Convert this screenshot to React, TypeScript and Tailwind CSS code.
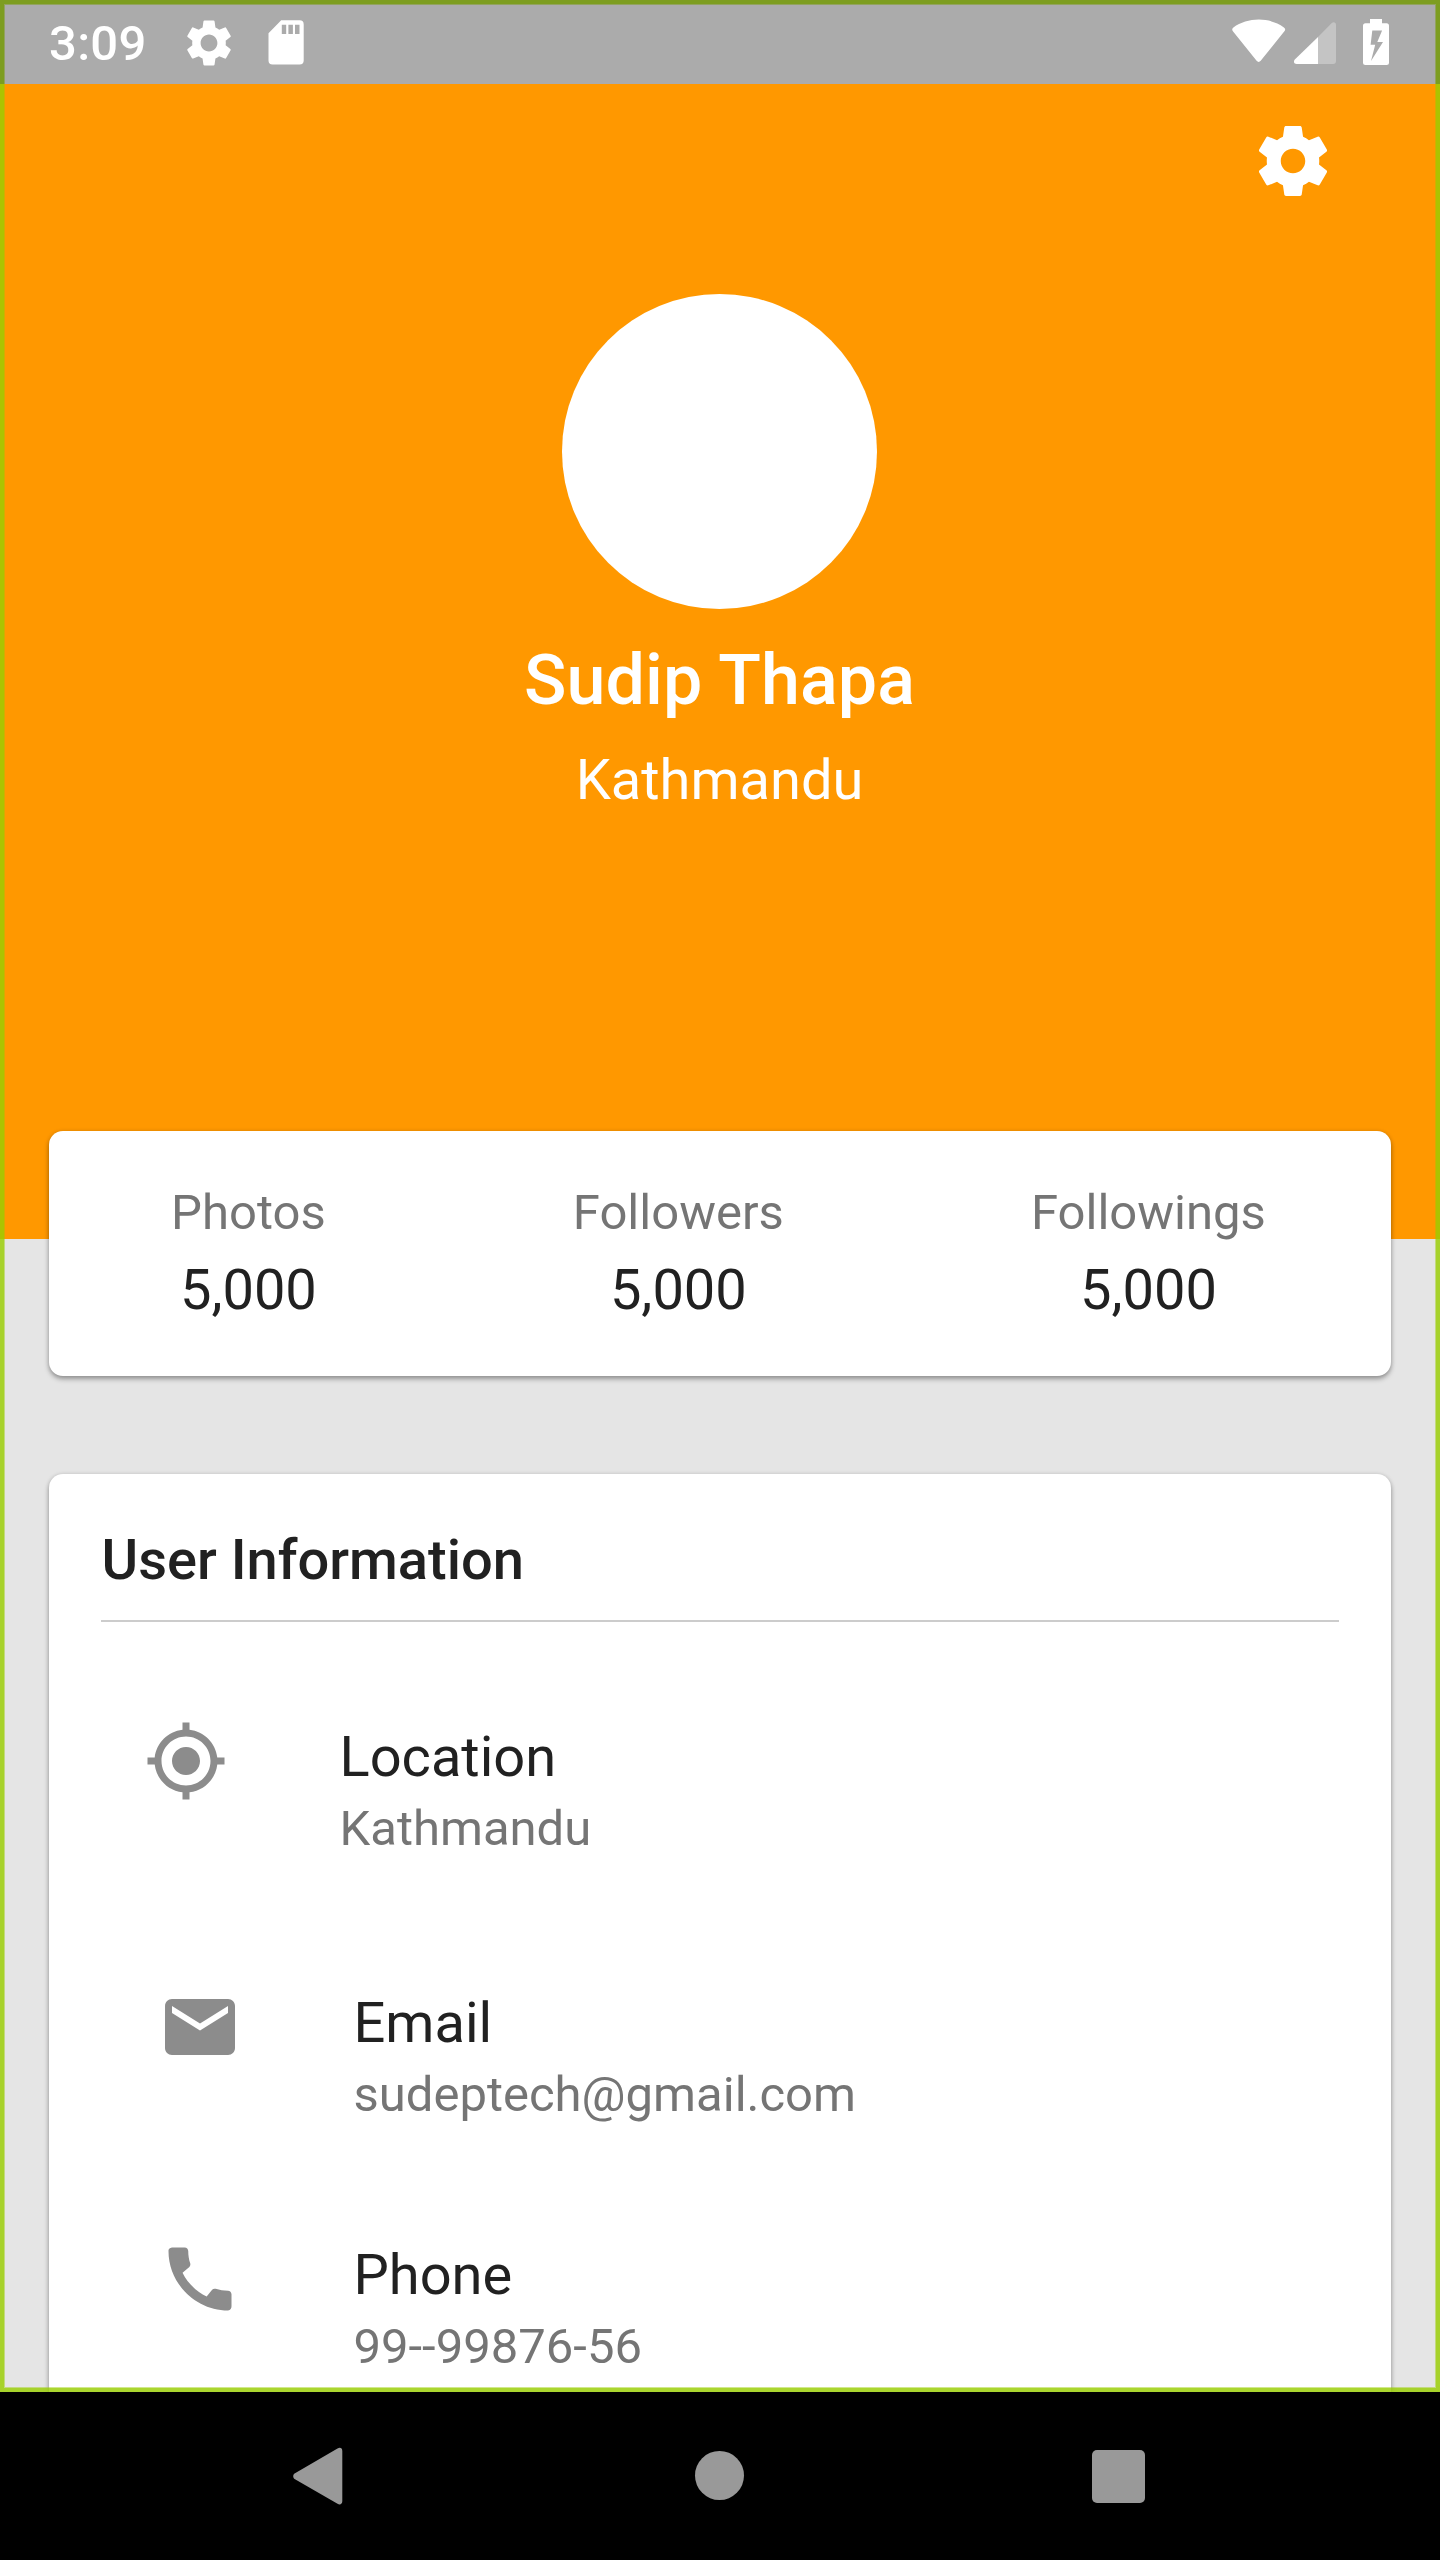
import type { ReactNode } from "react";
import { MdSettings } from "react-icons/md";

const GEAR =
  "M19.43 12.98c.04-.32.07-.64.07-.98s-.03-.66-.07-.98l2.11-1.65c.19-.15.24-.42.12-.64l-2-3.46c-.12-.22-.39-.3-.61-.22l-2.49 1c-.52-.4-1.08-.73-1.69-.98l-.38-2.65C14.46 2.18 14.25 2 14 2h-4c-.25 0-.46.18-.49.42l-.38 2.65c-.61.25-1.17.59-1.69.98l-2.49-1c-.23-.09-.49 0-.61.22l-2 3.46c-.13.22-.07.49.12.64l2.11 1.65c-.04.32-.07.65-.07.98s.03.66.07.98l-2.11 1.65c-.19.15-.24.42-.12.64l2 3.46c.12.22.39.3.61.22l2.49-1c.52.4 1.08.73 1.69.98l.38 2.65c.03.24.24.42.49.42h4c.25 0 .46-.18.49-.42l.38-2.65c.61-.25 1.17-.59 1.69-.98l2.49 1c.23.09.49 0 .61-.22l2-3.46c.12-.22.07-.49-.12-.64l-2.11-1.65zM12 15.5c-1.93 0-3.5-1.57-3.5-3.5s1.57-3.5 3.5-3.5 3.5 1.57 3.5 3.5-1.57 3.5-3.5 3.5z";
const MY_LOCATION =
  "M12 8c-2.21 0-4 1.79-4 4s1.79 4 4 4 4-1.79 4-4-1.79-4-4-4zm8.94 3c-.46-4.17-3.77-7.48-7.94-7.94V1h-2v2.06C6.83 3.52 3.52 6.83 3.06 11H1v2h2.06c.46 4.17 3.77 7.48 7.94 7.94V23h2v-2.06c4.17-.46 7.48-3.77 7.94-7.94H23v-2h-2.06zM12 19c-3.87 0-7-3.13-7-7s3.13-7 7-7 7 3.13 7 7-3.13 7-7 7z";
const EMAIL =
  "M20 4H4c-1.1 0-1.99.9-1.99 2L2 18c0 1.1.9 2 2 2h16c1.1 0 2-.9 2-2V6c0-1.1-.9-2-2-2zm0 4l-8 5-8-5V6l8 5 8-5v2z";
const PHONE =
  "M20.01 15.38c-1.23 0-2.42-.2-3.53-.56-.35-.12-.74-.03-1.01.24l-1.57 1.97c-2.83-1.35-5.48-3.9-6.89-6.83l1.95-1.66c.27-.28.35-.67.24-1.02-.37-1.11-.56-2.3-.56-3.53 0-.54-.45-.99-.99-.99H4.19C3.65 3 3 3.24 3 3.99 3 13.28 10.73 21 20.01 21c.71 0 .99-.63.99-1.18v-3.45c0-.54-.45-.99-.99-.99z";

function Icon({ d, className }: { d: string; className: string }) {
  return (
    <svg viewBox="0 0 24 24" fill="currentColor" className={className}>
      <path d={d} />
    </svg>
  );
}

function StatusBar() {
  return (
    <div className="flex h-[84px] items-start justify-between pl-[49px] pr-[51px] text-white">
      <div className="flex items-start">
        <span className="mt-[15px] w-[132px] text-[49px] font-medium leading-[58px] tracking-[0.3px]">3:09</span>
        <MdSettings className="mt-[14.5px] h-14 w-14" />
        <svg viewBox="0 0 36 45" className="ml-[31px] mt-5 h-[45px] w-9 shrink-0">
          <path
            fill="currentColor"
            fillRule="evenodd"
            d="M13.2.3H31.6a4.1 4.1 0 0 1 4.1 4.1V40.4a4.1 4.1 0 0 1-4.1 4.1H4.6a4.1 4.1 0 0 1-4.1-4.1V13.2zM13.8 4.7v9.2h4.4V4.7zM20.4 4.7v9.2h4.5V4.7zM27 4.7v9.2h4.5V4.7z"
          />
        </svg>
      </div>
      <div className="flex items-start">
        <svg viewBox="0 0 54 44" className="mt-[19px] h-11 w-[54px]">
          <path
            fill="currentColor"
            d="M1.1 12.6C-.1 11-.2 9.8 1.4 8.4 8.5 3.4 17.5.6 26.8.6s18 2.8 25.1 7.8c1.7 1.3 1.6 2.6.3 4.2L28.7 41.8c-1.2 1.5-2.9 1.5-4.1 0z"
          />
        </svg>
        <svg viewBox="0 0 43 43" className="ml-2 mt-[22px] h-[43px] w-[43px]">
          <path
            fill="currentColor"
            opacity=".3"
            d="M24 15 37.5 1.2C39.5-.8 42 .2 42 2.8V39a3 3 0 0 1-3 3H24z"
          />
          <path fill="currentColor" d="M24 15V42H2.6C0 42-.9 39.6.8 37.6z" />
        </svg>
        <svg viewBox="0 0 26 46" className="ml-[26px] mt-[19px] h-[46px] w-[26px]">
          <path
            fill="currentColor"
            fillRule="evenodd"
            d="M7 0H19V4.3H23.5A2.5 2.5 0 0 1 26 6.8V43.5A2.5 2.5 0 0 1 23.5 46H2.5A2.5 2.5 0 0 1 0 43.5V6.8A2.5 2.5 0 0 1 2.5 4.3H7zM9.3 11.6 7.6 25.7H12.2L8 42 20 23H14.3L19.1 11.6z"
          />
        </svg>
      </div>
    </div>
  );
}

function Card({ className, children }: { className: string; children: ReactNode }) {
  return (
    <section
      className={`rounded-[14px] bg-white shadow-[0_3px_5px_rgba(0,0,0,0.34),0_0_4px_rgba(0,0,0,0.1)] ${className}`}
    >
      {children}
    </section>
  );
}

function Stat({ label, value }: { label: string; value: string }) {
  return (
    <div className="flex flex-col items-center">
      <span className="text-[49px] leading-[58px] text-[#757575]">{label}</span>
      <span className="mt-[15px] text-[56px] leading-[66px]">{value}</span>
    </div>
  );
}

function InfoRow({ icon, label, value, className }: { icon: string; label: string; value: string; className: string }) {
  return (
    <div className={`flex h-[138px] items-start ${className}`}>
      <Icon d={icon} className="h-[84px] w-[84px] text-[#8c8c8c]" />
      <div className="ml-28 flex flex-col pt-[5px]">
        <span className="text-[56px] leading-[66px]">{label}</span>
        <span className="mt-[10px] text-[49px] leading-[58px] text-[#757575]">{value}</span>
      </div>
    </div>
  );
}

export default function App() {
  return (
    <div className="flex h-[2560px] w-[1440px] flex-col overflow-hidden bg-black font-[Roboto,sans-serif] text-[#212121]">
      <main className="relative h-[2392px] shrink-0 overflow-hidden bg-[#e5e5e5] pt-[84px]">
        <header className="flex h-[1155px] flex-col items-center bg-[#ff9800] pr-px pt-[35px] text-white">
          <Icon d={GEAR} className="mr-[104px] h-[84px] w-[84px] shrink-0 self-end" />
          <div className="mt-[91px] h-[315px] w-[315px] shrink-0 rounded-full bg-white" />
          <h1 className="mt-[30px] text-[70px] font-medium leading-[82px] tracking-[0.1px]">Sudip Thapa</h1>
          <p className="mt-[26px] text-[56px] leading-[66px]">Kathmandu</p>
        </header>
        <Card className="relative mx-[49px] -mt-[108.5px] h-[245px] pt-[53.5px]">
          <div className="-ml-[1.5px] mr-[1.5px] flex justify-around">
            <Stat label="Photos" value="5,000" />
            <Stat label="Followers" value="5,000" />
            <Stat label="Followings" value="5,000" />
          </div>
        </Card>
        <Card className="mx-[49px] mt-[98.5px] h-[1200px] px-[52.5px] pt-[53px]">
          <h2 className="text-[56px] font-medium leading-[66px]">User Information</h2>
          <div className="-ml-[0.5px] mt-[27px] h-0.5 bg-[#cccccc]" />
          <div className="pt-[97px]">
            <InfoRow icon={MY_LOCATION} label="Location" value="Kathmandu" className="ml-[42px]" />
            <InfoRow icon={EMAIL} label="Email" value="sudeptech@gmail.com" className="ml-14 mt-32" />
            <InfoRow icon={PHONE} label="Phone" value="99--99876-56" className="ml-14 mt-[114px]" />
          </div>
        </Card>
        <div className="pointer-events-none absolute inset-0 border-4 border-[rgba(152,205,1,0.82)]">
          <div className="h-full border border-[rgba(152,205,1,0.45)]" />
        </div>
        <div className="pointer-events-none absolute inset-x-0 top-0 h-[84px] bg-black/25">
          <StatusBar />
        </div>
      </main>
      <nav className="flex h-[168px] shrink-0 items-start text-[#999999]">
        <svg viewBox="0 0 50 58" className="ml-[293px] mt-[55px] h-[58px] w-[50px]">
          <path
            fill="currentColor"
            d="M2 26.2 44.5 1.6C47-.1 49.3 1 49.3 4V54.3C49.3 57 47 58.3 44.5 56.8L2 32.2C-.4 30.8-.4 27.6 2 26.2z"
          />
        </svg>
        <div className="ml-[352px] mt-[59px] h-[49px] w-[49px] rounded-full bg-[#999999]" />
        <div className="ml-[347.5px] mt-[57.5px] h-[53px] w-[53px] rounded-[5px] bg-[#999999]" />
      </nav>
    </div>
  );
}
